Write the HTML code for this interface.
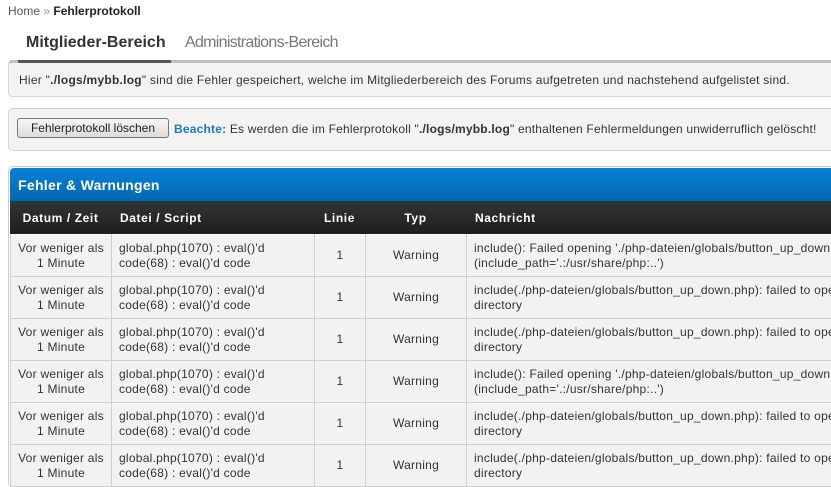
<!DOCTYPE html>
<html><head><meta charset="utf-8"><style>
*{margin:0;padding:0;box-sizing:border-box}
html,body{width:831px;height:487px;overflow:hidden}
body{background:#fff;font-family:"Liberation Sans",Tahoma,sans-serif;font-size:12px;color:#333;position:relative}
.a{position:absolute;white-space:nowrap}
.box{position:absolute;left:8px;width:823px;background:#f3f3f3;border:1px solid #d4d4d4;border-right:none;border-radius:5px 0 0 5px}
.wrap{position:absolute;left:10px;top:234px;width:821px;height:253px;overflow:hidden}
table{border-collapse:collapse;width:1000px;table-layout:fixed}
td{height:42px;border:1px solid #d0d0d0;border-top:1px solid #fff;background:#f2f2f2;line-height:15px;vertical-align:middle;white-space:nowrap;overflow:hidden;font-size:12px;color:#333;letter-spacing:0.25px}
td.c{text-align:center}
td.l{padding-left:7px}
</style></head><body>
<div class="a" style="left:8px;top:4px;color:#555">Home <span style="color:#999">»</span> <b style="color:#222">Fehlerprotokoll</b></div>
<div class="a" style="left:26px;top:34px;font-size:16px;font-weight:bold;color:#333">Mitglieder-Bereich</div>
<div class="a" style="left:185px;top:34px;font-size:16px;color:#777;letter-spacing:-0.7px">Administrations-Bereich</div>
<div class="box" style="top:60px;height:37px;border-top:3px solid #c0c0c0;border-radius:4px 0 0 4px"></div>
<div class="a" style="left:18px;top:60px;width:153px;height:3px;background:#555"></div>
<div class="a" style="left:19px;top:73px;letter-spacing:0.25px">Hier "<b>./logs/mybb.log</b>" sind die Fehler gespeichert, welche im Mitgliederbereich des Forums aufgetreten und nachstehend aufgelistet sind.</div>
<div class="box" style="top:108px;height:43px"></div>
<div class="a" style="left:17px;top:118px;width:152px;height:20px;border:1px solid #777;border-radius:3px;background:linear-gradient(#f6f6f6,#dcdcdc);text-align:center;line-height:18px;color:#222">Fehlerprotokoll löschen</div>
<div class="a" style="left:174px;top:122px;letter-spacing:0.2px"><b style="color:#1a7bc1">Beachte:</b> Es werden die im Fehlerprotokoll "<b>./logs/mybb.log</b>" enthaltenen Fehlermeldungen unwiderruflich gelöscht!</div>
<div class="a" style="left:8px;top:166px;width:823px;height:321px;border:1px solid #ccc;border-right:none;border-radius:5px 0 0 5px;background:#fff"></div>
<div class="a" style="left:10px;top:168px;width:821px;height:34px;background:linear-gradient(#0a82d6,#0266ae);border-radius:4px 0 0 0;border-bottom:1px solid #044;color:#fff;font-weight:bold;font-size:14px;line-height:34px;padding-left:8px;letter-spacing:0.3px">Fehler &amp; Warnungen</div>
<div class="a" style="left:10px;top:202px;width:821px;height:32px;background:linear-gradient(#333,#1e1e1e);color:#fff;font-weight:bold;font-size:12px;line-height:32px;letter-spacing:0.6px;overflow:hidden">
<div class="a" style="left:0;width:101px;text-align:center">Datum / Zeit</div>
<div class="a" style="left:110px">Datei / Script</div>
<div class="a" style="left:304px;width:51px;text-align:center">Linie</div>
<div class="a" style="left:355px;width:101px;text-align:center">Typ</div>
<div class="a" style="left:465px">Nachricht</div>
</div>
<div class="wrap"><table>
<colgroup><col style="width:101px"><col style="width:203px"><col style="width:51px"><col style="width:101px"><col></colgroup>
<tr><td class="c">Vor weniger als<br>1 Minute</td><td class="l">global.php(1070) : eval()'d<br>code(68) : eval()'d code</td><td class="c">1</td><td class="c">Warning</td><td class="l">include(): Failed opening './php-dateien/globals/button_up_down.php' for inclusion<br>(include_path='.:/usr/share/php:..')</td></tr>
<tr><td class="c">Vor weniger als<br>1 Minute</td><td class="l">global.php(1070) : eval()'d<br>code(68) : eval()'d code</td><td class="c">1</td><td class="c">Warning</td><td class="l">include(./php-dateien/globals/button_up_down.php): failed to open stream: No such file or<br>directory</td></tr>
<tr><td class="c">Vor weniger als<br>1 Minute</td><td class="l">global.php(1070) : eval()'d<br>code(68) : eval()'d code</td><td class="c">1</td><td class="c">Warning</td><td class="l">include(./php-dateien/globals/button_up_down.php): failed to open stream: No such file or<br>directory</td></tr>
<tr><td class="c">Vor weniger als<br>1 Minute</td><td class="l">global.php(1070) : eval()'d<br>code(68) : eval()'d code</td><td class="c">1</td><td class="c">Warning</td><td class="l">include(): Failed opening './php-dateien/globals/button_up_down.php' for inclusion<br>(include_path='.:/usr/share/php:..')</td></tr>
<tr><td class="c">Vor weniger als<br>1 Minute</td><td class="l">global.php(1070) : eval()'d<br>code(68) : eval()'d code</td><td class="c">1</td><td class="c">Warning</td><td class="l">include(./php-dateien/globals/button_up_down.php): failed to open stream: No such file or<br>directory</td></tr>
<tr><td class="c">Vor weniger als<br>1 Minute</td><td class="l">global.php(1070) : eval()'d<br>code(68) : eval()'d code</td><td class="c">1</td><td class="c">Warning</td><td class="l">include(./php-dateien/globals/button_up_down.php): failed to open stream: No such file or<br>directory</td></tr>
</table></div>
</body></html>
